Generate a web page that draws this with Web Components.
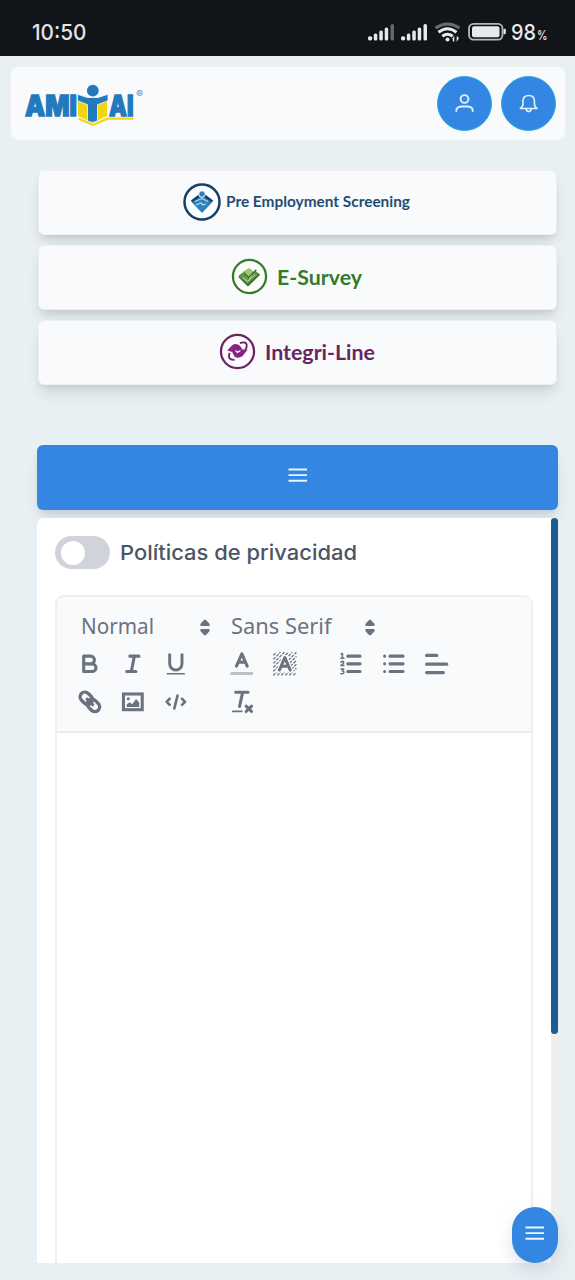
<!DOCTYPE html>
<html lang="es">
<head>
<meta charset="utf-8">
<meta name="viewport" content="width=device-width">
<title>Amitai</title>
<style>
html,body{margin:0;height:100%;overflow:hidden;background:#e8f0f3}
body{font-family:Inter,"Liberation Sans",sans-serif}
</style>
</head>
<body>
<amitai-app></amitai-app>
<script>
const define = (name, css, html) => customElements.define(name, class extends HTMLElement {
  constructor() {
    super();
    const markup = typeof html === 'function' ? html(this) : html;
    this.attachShadow({mode: 'open'}).innerHTML = `<style>*{box-sizing:border-box}svg{display:block}${css}</style>${markup}`;
  }
});

/* One line of text whose advance is fitted to a given width. */
define('fit-text', ':host{display:block;flex:none}svg{overflow:visible}', el => {
  const a = n => el.getAttribute(n);
  return `<svg width="${a('w')}" height="${a('h')}"><text x="0" y="${a('base')}" textLength="${a('w')}" lengthAdjust="spacingAndGlyphs" fill="${a('color')}" font-family="${a('font')},sans-serif" font-size="${a('size')}" font-weight="${a('weight') || 400}">${a('text')}</text></svg>`;
});

const B = 'fill="none" stroke="#6b7280" stroke-linecap="round" stroke-linejoin="round"';
const S = B + ' stroke-width="2"';
const F = 'fill="#6b7280"';
const hatch = () => {
  let d = '';
  for (let s = 5; s < 34; s += 2.6) {
    const x0 = Math.max(1.5, s - 16.5), x1 = Math.min(16.5, s - 1.5);
    if (x1 > x0) d += `M${x0} ${s - x0}L${x1} ${s - x1}`;
  }
  return d;
};
const icons = {
  bold: `<path ${S} d="M5 4h4.500a2.500 2.500 0 0 1 0 5H5zM5 9h5.500a2.500 2.500 0 0 1 0 5H5z"/>`,
  italic: `<path ${S} d="M7 4h6M5 14h6M10 4 8 14"/>`,
  underline: `<path ${B} stroke-width="1.900" d="M5 3v6a4 4 0 0 0 8 0V3"/><rect ${F} x="3" y="15" width="12" height="1" rx=".5"/>`,
  color: `<path stroke="#bcbfc6" stroke-width="2" stroke-linecap="round" d="M2.500 15.300h13"/><path ${S} d="M5.500 10.500 9 2.500l3.500 8M6.500 8h5"/>`,
  background: `<path fill="none" stroke="#6b7280" stroke-width=".85" stroke-dasharray="2 .8" d="${hatch()}"/><path fill="#f9fafc" d="M7.600 3.400h2.800l4.600 10.900H3z"/><path ${S} d="M5.500 13 9 5l3.500 8M6.700 10.600h4.600"/>`,
  ordered: `<path ${S} d="M7 4h8M7 9h8M7 14h8"/><path ${B} stroke-width="1" d="m2.700 2.600.8-.4v3M2.500 5.300h2M2.500 7.900q1.400-1 1.800 0T2.500 10.100h2M2.600 12.400h1.800l-.9 1.200q1.200.1 1 1.100t-2 .7"/>`,
  bullet: `<path ${S} d="M6.500 4h8.500M6.500 9h8.500M6.500 14h8.500M3 4h.01M3 9h.01M3 14h.01"/>`,
  align: `<path ${S} d="M2.300 3.500H9M2.300 9.200h13.200M2.300 14.700h11"/>`,
  link: `<g transform="rotate(45 9 9)"><rect fill="none" stroke="#6b7280" stroke-width="2.200" x="1.300" y="5.900" width="8.800" height="6.200" rx="3.100"/><rect fill="none" stroke="#6b7280" stroke-width="2.200" x="7.900" y="5.900" width="8.800" height="6.200" rx="3.100"/><path ${S} d="M6.500 9h5"/></g>`,
  image: `<rect fill="none" stroke="#6b7280" stroke-width="2" x="2.900" y="3.900" width="12.200" height="10.200"/><circle ${F} cx="6" cy="7" r="1"/><path ${F} d="M5 12.300v-1.500l2-1.500 1.600 1.200 2.500-3.300 2 2.200v2.900z"/>`,
  code: `<path ${B} stroke-width="1.700" d="M5 7 3 9l2 2M13 7l2 2-2 2M10.100 5 8 13.300"/>`,
  clean: `<path ${B} stroke-width="2" d="M5 2.800h8M9.500 3 7.500 12"/><path ${B} stroke-width="1" d="M3 15.200h6"/><path ${S} d="m11.800 11.800 3.500 3.500M15.300 11.800l-3.500 3.500"/>`
};
define('tool-button', ':host{display:flex;width:43px;height:37.5px;align-items:center;justify-content:center}svg{width:27.7px;height:27.7px}',
  el => `<svg viewBox="0 0 18 18">${icons[el.getAttribute('icon')]}</svg>`);

define('tool-picker', ':host{display:flex;width:var(--w);height:37.5px;padding:1px 8px 0 12.500px;align-items:center;justify-content:space-between}',
  '<slot></slot><svg width="12" height="17"><path fill="#6b7280" d="M6 .5q.8 0 4.600 4.500.7 2-1 2H2.400q-1.700 0-1-2Q5.200.5 6 .5ZM6 16.500q.8 0 4.600-4.500.7-2-1-2H2.400q-1.700 0-1 2 3.800 4.500 4.600 4.500Z"/></svg>');

define('tool-group', ':host{display:flex;margin-right:23px}', '<slot></slot>');

define('rich-editor', `
:host{display:block;flex:none;width:478px;height:740px;border:2px solid #edeff1;border-radius:9px;overflow:hidden;background:#fff}
.bar{height:136px;border-bottom:2px solid #ebeef0;background:#f9fafc;padding:11px 0 0 11.500px}
.row{display:flex;height:37.5px}`, `
<div class="bar">
 <div class="row"><tool-group>
  <tool-picker style="--w:150px"><fit-text text="Normal" w="73" h="26" base="20" size="22" font="Noto Sans" color="#6b7280"></fit-text></tool-picker>
  <tool-picker style="--w:165.500px"><fit-text text="Sans Serif" w="100.500" h="26" base="20" size="22" font="Noto Sans" color="#6b7280"></fit-text></tool-picker>
 </tool-group></div>
 <div class="row">
  <tool-group><tool-button icon="bold"></tool-button><tool-button icon="italic"></tool-button><tool-button icon="underline"></tool-button></tool-group>
  <tool-group><tool-button icon="color"></tool-button><tool-button icon="background"></tool-button></tool-group>
  <tool-group><tool-button icon="ordered"></tool-button><tool-button icon="bullet"></tool-button><tool-button icon="align"></tool-button></tool-group>
 </div>
 <div class="row">
  <tool-group><tool-button icon="link"></tool-button><tool-button icon="image"></tool-button><tool-button icon="code"></tool-button></tool-group>
  <tool-group><tool-button icon="clean"></tool-button></tool-group>
 </div>
</div>`);

define('status-bar', `
:host{display:flex;height:55.500px;flex:none;background:#111419;align-items:center;justify-content:space-between;padding:8px 28px 0 32px}
.right{display:flex;align-items:center}fit-text+fit-text{margin-left:.5px}`, `
<fit-text text="10:50" w="54.500" h="26" base="20.500" size="22" weight="500" font="Inter" color="#e4e5e7"></fit-text>
<div class="right">
 <svg width="143" height="26" fill="#e8e9ea">
  <g id="bars"><rect x="0" y="17.300" width="4.200" height="4.200" rx="1.700"/><rect x="5.800" y="14.500" width="3.500" height="7" rx="1.500"/><rect x="11.300" y="11.500" width="3.500" height="10" rx="1.500"/><rect x="16.700" y="8.500" width="3.500" height="13" rx="1.500"/></g>
  <rect x="22.500" y="5" width="3.500" height="16.500" rx="1.500" fill="#62656a"/>
  <use href="#bars" x="33"/><rect x="55.500" y="5" width="3.500" height="16.500" rx="1.500"/>
  <g fill="none" stroke-width="3"><path stroke="#686b70" d="M67.500 9q12-8 24 0"/><path stroke="#e8e9ea" d="M70.500 13.200q9-7 18 0M74.300 17.300q5.200-4 10.400 0"/></g>
  <circle cx="79.500" cy="20.500" r="2"/><path d="m84 20 2.300-3v5.500h-1.500V20zm7-1-2.300 4v-5.500h1.500V19z"/>
  <rect x="101" y="4.800" width="33.500" height="15.800" rx="4.500" fill="none" stroke="#b5b6b9" stroke-width="1.800"/><rect x="104" y="7.300" width="27.500" height="11" rx="2"/><rect x="135.500" y="9.800" width="2.300" height="5.500" rx="1"/>
 </svg>
 <fit-text text="98" w="25" h="26" base="20.500" size="22" weight="500" font="Inter" color="#e8e9ea"></fit-text>
 <fit-text text="%" w="10.500" h="26" base="20.500" size="13.500" weight="500" font="Inter" color="#e8e9ea"></fit-text>
</div>`);

define('brand-logo', ':host{display:block}svg{overflow:visible}', `
<svg width="120" height="44" viewBox="25 83 120 44" font-family="Inter,sans-serif" font-weight="900" fill="#2279bd" stroke="#2279bd">
 <path stroke="none" fill="#f3d50d" d="M78 98.500h29v17.500L92.500 123 78 116z"/>
 <text x="25" y="115.500" font-size="29" textLength="52" lengthAdjust="spacingAndGlyphs" stroke-width="1.300">AMI</text>
 <text x="109" y="115.500" font-size="29" textLength="24.500" lengthAdjust="spacingAndGlyphs" stroke-width="1.300">AI</text>
 <g stroke="none"><path stroke="#f9fafc" stroke-width=".8" d="M77.500 94.300 87.500 97.500h10.500L108 94.300v6.400l-10.500 4v14.500q0 3-5 3t-5-3v-14.500L77.500 100.700z"/><circle cx="92.800" cy="90.600" r="5.900"/></g>
 <path fill="none" stroke="#f3d50d" stroke-width="2.200" d="m78.500 118.800 14.500 6.100 14.500-6.200h25.800"/>
 <text x="136" y="98" font-size="10" font-weight="700" textLength="7" lengthAdjust="spacingAndGlyphs" stroke="none" fill="#5b99cb">®</text>
</svg>`);

define('round-button', ':host{display:flex;width:55px;height:55px;border-radius:50%;background:#3386e1;border:1px solid #28a9ef;align-items:center;justify-content:center;color:#e2efff}', '<slot></slot>');

define('top-bar', `
:host{display:flex;height:75px;margin:10.500px 9px 0 10px;flex:none;align-items:center;border:1.500px solid #edf0f1;border-radius:8px;background:#f9fafc;padding:0 9px 0 14px}
.buttons{display:flex;gap:9px;margin-left:auto}brand-logo{padding-top:3px}`, `
<brand-logo></brand-logo>
<div class="buttons">
 <round-button><svg width="22" height="22" fill="none" stroke="#e2efff" stroke-width="1.900"><circle cx="10.500" cy="6" r="3.900"/><path stroke-linecap="round" d="M2.300 18v-.5q0-4 6-4h4.400q6 0 6 4v.5"/></svg></round-button>
 <round-button><svg width="22" height="22" fill="none" stroke="#e2efff" stroke-width="1.600" stroke-linejoin="round" stroke-linecap="round"><path d="M2.300 15.500q2.700-1.500 2.700-5V8q0-5.500 5.700-5.500T16.400 8v2.500q0 3.500 2.700 5zM8 16q.7 2.500 2.700 2.500t2.700-2.500"/></svg></round-button>
</div>`);

define('product-card', `
:host{display:flex;height:65px;align-items:center;justify-content:center;gap:var(--gap,9px);padding:0 1px 1px 0;border-radius:6px;background:#f9fafc;border:1px solid #edf0f2;box-shadow:0 10px 15px -3px #0000001c,0 4px 6px -2px #00000014}`, '<slot></slot>');

const badges = {
  pre: `<circle cx="19" cy="19" r="17.500" fill="#fcfdff" stroke="#173f68" stroke-width="2.500"/><path fill="#2e81bf" d="m19 10 10 9.500-10 10.500L9 19.500z"/><path fill="none" stroke="#173f68" stroke-width="2.300" d="m8.500 18.500 8-6M21.500 12.500l8 6"/><circle cx="19" cy="11" r="3.300" fill="#2e81bf" stroke="#fcfdff"/><path fill="none" stroke="#b9d9ef" stroke-width="1.100" d="m12 18.500 7-3 6 3M13 22l5-2 2 2 3-1"/>`,
  survey: `<circle cx="19" cy="19" r="17" fill="#fcfdfa" stroke="#357b2b" stroke-width="2.300"/><path fill="#5d9447" d="m8 18 4-3 7 6 6-8 5 4-12 12z"/><path fill="#9bc86b" d="m12 14 7-4 5 5-7 6z"/><path fill="none" stroke="#2e6f26" stroke-width="1.400" d="m8 19 9 9 12-11M13 15l5 5 8-8"/><path stroke="#d5e9bf" d="m12 20 5 4 8-7" fill="none"/>`,
  line: `<circle cx="19" cy="19" r="17" fill="#fffaff" stroke="#66275f" stroke-width="2.300"/><path fill="#842583" d="m8.500 18 5-5.500q4-2.500 8 .5l2.500 4h5.500l-5.500 7q-4 2.500-8 .5l-2.500-5z"/><path fill="none" stroke="#66275f" stroke-width="1.900" d="M11 20.500q-3 7.500 5 7M21.500 10.500q6.500-2.500 7 2 .2 2.500-1.500 4.500"/><path fill="none" stroke="#fff" stroke-width="1.200" d="m17 18 2 2 3-2"/>`
};
define('product-badge', ':host{display:block}', el => `<svg width="${el.getAttribute('size')}" height="${el.getAttribute('size')}" viewBox="0 0 38 38">${badges[el.getAttribute('kind')]}</svg>`);

define('product-list', ':host{display:flex;flex-direction:column;gap:10px;margin:28.500px 18.500px 0 37.500px;flex:none}', `
<product-card style="--gap:5px"><product-badge kind="pre" size="38"></product-badge><fit-text text="Pre Employment Screening" w="184" h="26" base="18" size="14.500" weight="700" font="Lato" color="#244c76"></fit-text></product-card>
<product-card><product-badge kind="survey" size="37"></product-badge><fit-text text="E-Survey" w="85" h="28" base="22" size="21.500" weight="700" font="Lato" color="#357b2b"></fit-text></product-card>
<product-card><product-badge kind="line" size="37"></product-badge><fit-text text="Integri-Line" w="110" h="28" base="22" size="21.500" weight="700" font="Lato" color="#66275f"></fit-text></product-card>`);

define('menu-glyph', ':host{display:block}', '<svg width="20" height="15" stroke="#eaf5ff" stroke-width="1.900"><path d="M.5 1.500h18.500M.5 7.100h18.500M.5 12.700h18.500"/></svg>');
define('menu-bar', ':host{display:flex;flex:none;height:65px;margin:60px 17px 0 37px;align-items:center;justify-content:center;padding-bottom:4px;border-radius:6px;background:#3386e1;box-shadow:0 10px 15px -3px #0000001c,0 4px 6px -2px #00000014}', '<menu-glyph></menu-glyph>');

define('toggle-switch', ':host{display:flex;width:55px;height:33px;border-radius:17px;background:#d1d3da;align-items:center;padding-left:6px;flex:none}i{width:24px;height:24px;border-radius:50%;background:#fff}', '<i></i>');

define('policy-panel', `
:host{display:flex;flex:none;height:745px;margin:8px 17px 0 37px}
.page{flex:1;overflow:hidden;background:#fff;border-radius:7px 0 0 0;padding:18.500px 0 0 18px;display:flex;flex-direction:column;gap:26px}
.head{display:flex;align-items:center;height:33px;gap:9.500px;flex:none}
.track{width:7px;background:#eeeff1;border-radius:4px 4px 0 0}
.thumb{height:516px;background:#1b5d91;border-radius:4px}`, `
<div class="page">
 <div class="head"><toggle-switch></toggle-switch><fit-text text="Políticas de privacidad" w="237" h="30" base="21.500" size="20.500" weight="500" font="Inter" color="#4b5563"></fit-text></div>
 <rich-editor></rich-editor>
</div>
<div class="track"><div class="thumb"></div></div>`);

define('floating-menu', ':host{position:absolute;right:17.500px;bottom:17px;width:46px;height:56px;border-radius:23px;background:#3386e1;display:flex;align-items:center;justify-content:center;padding-bottom:3px;box-shadow:0 8px 16px #7d8a9740}', '<menu-glyph></menu-glyph>');

define('amitai-app', ':host{display:flex;flex-direction:column;height:1280px;position:relative;background:#e8f0f3;overflow:hidden}',
  '<status-bar></status-bar><top-bar></top-bar><product-list></product-list><menu-bar></menu-bar><policy-panel></policy-panel><floating-menu></floating-menu>');
</script>
</body>
</html>
